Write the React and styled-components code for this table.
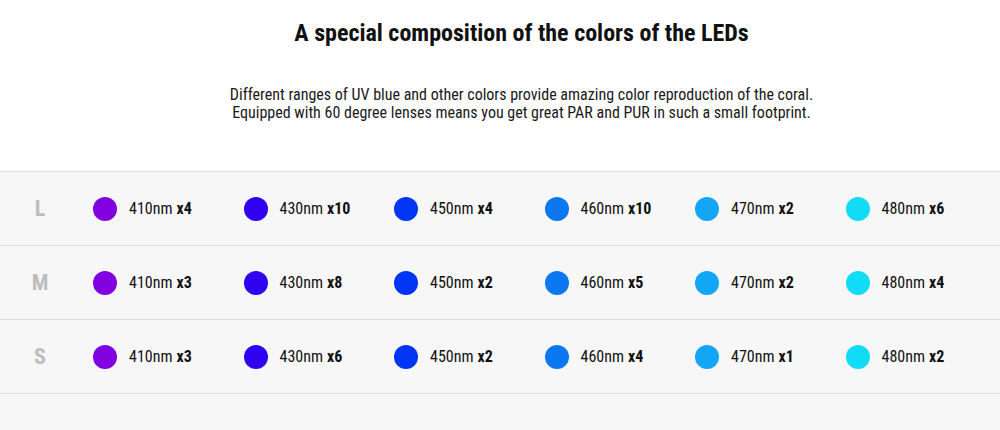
import React from "react";
import styled, { createGlobalStyle } from "styled-components";

const GlobalStyle = createGlobalStyle`
  html, body {
    margin: 0;
    padding: 0;
    background: #ffffff;
  }
  body {
    font-family: "Liberation Sans Narrow", "Roboto Condensed", "DejaVu Sans Condensed", sans-serif;
    color: #111;
  }
`;

const Page = styled.div`
  width: 1000px;
  height: 430px;
  overflow: hidden;
  display: flex;
  flex-direction: column;
`;

const Header = styled.header`
  display: flex;
  flex-direction: column;
  align-items: center;
  padding: 19px 0 0 43px;
  height: 152px;
  box-sizing: border-box;
  height: 171px;
`;

const Title = styled.h2`
  margin: 0;
  font-size: 24px;
  font-weight: 700;
  line-height: 28px;
  color: #111;
`;

const Lead = styled.p`
  margin: 39px 0 0;
  font-size: 16px;
  line-height: 18px;
  text-align: center;
  color: #1a1a1a;
`;

const Table = styled.div`
  flex: 1;
  background: #f7f7f7;
  border-top: 1px solid #dedede;
`;

const Row = styled.div`
  display: grid;
  grid-template-columns: 93px repeat(6, 150.5px);
  align-items: center;
  height: 73px;
  border-bottom: 1px solid #dedede;
`;

const Size = styled.div`
  text-align: center;
  padding-right: 13px;
  font-size: 22px;
  font-weight: 700;
  color: #bdbdbd;
`;

const Led = styled.div`
  display: flex;
  align-items: center;
  gap: 12px;
  font-size: 16px;
  color: #111;
`;

const Dot = styled.span`
  width: 24px;
  height: 24px;
  border-radius: 50%;
  background: ${(props) => props.color};
  flex-shrink: 0;
`;

const Count = styled.b`
  font-weight: 700;
  margin-left: 4px;
`;

const colors = {
  410: "#8000df",
  430: "#3000f0",
  450: "#0035f5",
  460: "#0b77f0",
  470: "#12a6f5",
  480: "#12dbf8",
};

const rows = [
  { size: "L", counts: [4, 10, 4, 10, 2, 6] },
  { size: "M", counts: [3, 8, 2, 5, 2, 4] },
  { size: "S", counts: [3, 6, 2, 4, 1, 2] },
];

const waves = [410, 430, 450, 460, 470, 480];

const App = () => {
  return (
    <Page>
      <GlobalStyle />
      <Header>
        <Title>A special composition of the colors of the LEDs</Title>
        <Lead>
          Different ranges of UV blue and other colors provide amazing color reproduction of the coral.
          <br />
          Equipped with 60 degree lenses means you get great PAR and PUR in such a small footprint.
        </Lead>
      </Header>
      <Table>
        {rows.map((row) => (
          <Row key={row.size}>
            <Size>{row.size}</Size>
            {waves.map((w, i) => (
              <Led key={w}>
                <Dot color={colors[w]} />
                <span>
                  {w}nm<Count>x{row.counts[i]}</Count>
                </span>
              </Led>
            ))}
          </Row>
        ))}
      </Table>
    </Page>
  );
};

export default App;
